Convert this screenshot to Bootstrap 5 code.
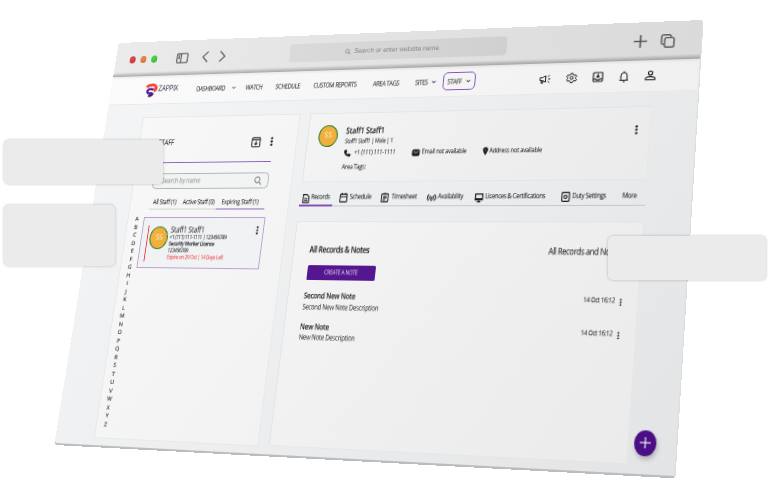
<!DOCTYPE html>
<html lang="en">
<head>
<meta charset="utf-8">
<meta name="viewport" content="width=device-width, initial-scale=1">
<title>Zappix – Staff</title>
<link href="https://cdn.jsdelivr.net/npm/bootstrap@5.3.0/dist/css/bootstrap.min.css" rel="stylesheet">
<style>
  html, body { width: 771px; height: 502px; overflow: hidden; background: #fff; }
  .stage { width: 771px; height: 502px; }
  /* the browser window is laid out flat at 630x430, then tilted in perspective */
  .plane {
    width: 630px; height: 430px; transform-origin: 0 0;
    transform: matrix3d(.795067,-.0402603,0,-.000187649, -.156947,.864912,0,-.00014745, 0,0,1,0, 118.6,43,0,1);
    font-family: "Open Sans", "Noto Sans", sans-serif; font-size: 5.6px; line-height: 1;
    letter-spacing: -.025em; color: #1d1d20; white-space: nowrap; text-rendering: geometricPrecision;
    -webkit-text-stroke: .05px currentColor;
    background: linear-gradient(125deg, #f3f4f6 10%, #eceef0 50%, #e2e4e6 100%);
    border-radius: 3px 3px 0 4px;
    box-shadow: 0 2px 0 #babcbd, 1px 0 0 #dcdddd;
  }
  svg { display: block; fill: none; stroke: currentColor; overflow: visible; }
  .semi { font-weight: 600; }
  /* condensed lettering */
  .tall { display: inline-block; transform: scaleY(1.22); }
  .chrome {
    height: 38.5px; border-radius: 3px 3px 0 0; color: #5b5b5b;
    background: linear-gradient(180deg, transparent 34px, rgba(90,90,90,.28) 37px, rgba(90,90,90,.4) 38.5px), linear-gradient(100deg, #ebebeb, #dadada);
    display: grid; align-items: center; padding-top: 1px;
    grid-template-columns: 16.5px 13px 13px 30.5px 30.3px 19.5px 81.2px 234px 139.7px 27.1px;
  }
  .lamp { width: 7.4px; height: 8px; border-radius: 50%; }
  .lamp-r { background: radial-gradient(circle at 40% 40%, #e04a4a, #c4252b); }
  .lamp-o { background: radial-gradient(circle at 40% 40%, #ea8a4e, #cf6a30); }
  .lamp-g { background: radial-gradient(circle at 40% 40%, #4bd44b, #2bb32e); }
  .address { height: 20.5px; margin-top: -1.5px; padding-right: 9px; border-radius: 4px; background: linear-gradient(100deg, #dadada, #d0d0d0); color: #858585; font: 6.7px/1 Inter, sans-serif; letter-spacing: -.02em; -webkit-text-stroke: 0; }
  .topnav {
    height: 32.5px; background: linear-gradient(100deg, #fbfbfb, #f0f0f0); border-bottom: 1px solid #e7e9ea;
    display: grid; align-items: center; padding-top: 1.4px;
    box-shadow: inset 0 2px 2px rgba(0,0,0,.05);
    grid-template-columns: 41.5px 15.5px 45px 57px 34px 42.4px 65.3px 45.2px 28.7px 99.6px 27px 26px 25.5px 25.5px 14px;
    font-size: 6px; letter-spacing: -.055em;
  }
  .current { width: 34.5px; height: 19.5px; margin-top: -.6px; border: 1px solid #8355b8; border-radius: 5px; }
  .brand-name { font-size: 7.5px; letter-spacing: -.03em; color: #34304a; -webkit-text-stroke: 0; }
  .workspace { padding: 13.5px 43px 0 44px; display: grid; grid-template-columns: 181px 351.5px; gap: 10.5px; }
  .pane { background: linear-gradient(125deg, #f4f4f4, #efefef 50%, #ebebeb); border: 1px solid rgba(216,221,221,.5); }
  .staff-pane { height: 338px; background: linear-gradient(125deg, #f8f8f8, #f2f2f2); }
  .side { padding: 0 25.5px 0 21.5px; }
  .side-head { height: 50px; padding-top: 9px; border-bottom: 1.3px solid #8d62bd; font-size: 7px; }
  .side-tools { width: 25px; }
  .finder { height: 17.5px; margin-top: 11px; padding: 0 6.5px 0 10px; border: .8px solid #b0b3b5; border-radius: 4.5px; color: #8b8d90; background: #f2f4f4; font-size: 6.2px; }
  .filters { margin-top: 6.5px; height: 15.5px; display: grid; grid-template-columns: 4.5px 34.5px 38px 54.5px; align-items: center; font-size: 5.8px; border-bottom: 1.2px solid #cfd1d2; }
  .filters .tall { position: relative; top: .7px; }
  .filters .chosen { height: 15.5px; border-bottom: 1.5px solid #8d62bd; padding-left: 6px; }
  .roster { display: grid; grid-template-columns: 18px 138px; padding-top: 8px; }
  .alphabet { font-size: 6px; line-height: 8.52px; text-align: center; margin-left: 2px; width: 16px; margin-top: -2px; -webkit-text-stroke: .1px currentColor; }
  .person { height: 54px; border: 1px solid #b9a0d6; background: #f0f2f4; display: grid; grid-template-columns: 6px 1.4px 2px 22px .8px 1fr 8px; }
  .warn { background: #f0343a; height: 38px; margin-top: 8px; }
  .face { width: 21px; height: 24px; border-radius: 50%; background: #efb03c; border: 1.3px solid #2f7d2f; color: #fdf3dc; font-size: 8px; -webkit-text-stroke: 0; }
  .person .face { margin-top: 9px; }
  .facts { padding-top: 9px; font-size: 4.95px; letter-spacing: -.05em; }
  .facts div { height: 6.9px; line-height: 6.9px; }
  .facts .who { font-size: 7.3px; height: 9.2px; line-height: 8.3px; letter-spacing: -.03em; -webkit-text-stroke: 0; }
  .facts .tall { transform-origin: 0 50%; }
  .expire { color: #f23b3f; }
  .profile { height: 73px; display: grid; grid-template-columns: 11.5px 29.5px 1fr 14.4px; }
  .profile .face { margin-top: 12.3px; height: 23px; }
  .profile-name { padding-top: 16px; font-size: 7.3px; height: 24.8px; }
  .profile-line { font-size: 5.4px; height: 9px; padding-top: 2.4px; letter-spacing: -.045em; }
  .contact { display: grid; grid-template-columns: 11.5px 61.7px 9.9px 63.1px 6.6px 60px; align-items: center; height: 8px; margin-top: 4.5px; }
  .sections { height: 25px; display: grid; grid-template-columns: 3.2px 9.5px 30.5px 11.1px 33.600px 10.8px 36.600px 11.4px 38.2px 10px 75.600px 10.5px 48.5px 20px; align-items: center; border-bottom: 1.2px solid #c6c9cb; padding-top: 9.8px; font-size: 5.95px; letter-spacing: -.05em; }
  .marker { width: 36.7px; height: 1.5px; background: #8050b6; margin-top: -1.4px; }
  .notes { height: 224px; margin-top: 14.9px; padding: 26.4px 14px 0 17px; }
  .head { font-size: 7.4px; letter-spacing: -.045em; height: 8px; }
  .filter-name { width: 74px; font-size: 7.4px; }
  .make { width: 72.5px; height: 15.8px; background: #55178f; color: #f3eaff; border-radius: 1.5px; font-size: 5.4px; letter-spacing: -.06em; margin-top: 9.8px; -webkit-text-stroke: 0; }
  .note { height: 30.5px; }
  .note-list { padding-top: 12.8px; }
  .note-title { font-size: 6.6px; height: 7px; letter-spacing: -.02em; }
  .note-text { font-size: 6.1px; letter-spacing: -.03em; margin-top: 3.5px; -webkit-text-stroke: 0; }
  .stamp { font-size: 5.5px; letter-spacing: -.035em; }
  .fab { position: absolute; left: 591.5px; top: 391px; width: 20.5px; height: 22.8px; border-radius: 50%; background: #4a0f84; color: #fff; box-shadow: 1px 3px 4px rgba(0,0,0,.22); }
  .slab { position: absolute; background: #ebebeb; border-radius: 5px; box-shadow: 0 0 3px rgba(0,0,0,.25); }
  .slab-a { left: 4px; top: 140px; width: 159px; height: 44px; }
  .slab-b { left: 4px; top: 205px; width: 111px; height: 61px; }
  .slab-c { left: 608px; top: 236px; width: 158px; height: 44px; }
</style>
</head>
<body>
<svg width="0" height="0" class="position-absolute" aria-hidden="true">
  <symbol id="dots" viewBox="0 0 4 12"><g fill="#222" stroke="none"><circle cx="2" cy="2" r="1.400"/><circle cx="2" cy="6" r="1.400"/><circle cx="2" cy="10" r="1.400"/></g></symbol>
  <symbol id="lens" viewBox="0 0 10 10"><circle cx="4" cy="4" r="3.200"/><path d="M6.200 6.200 9.500 9.500"/></symbol>
  <symbol id="down" viewBox="0 0 6 4"><path d="M.8.800 3 3.100 5.200.800"/></symbol>
</svg>
<main class="stage position-relative overflow-hidden">
  <div class="plane position-relative">
    <header class="chrome">
      <i></i><span class="lamp lamp-r"></span><span class="lamp lamp-o"></span><span class="lamp lamp-g"></span>
      <svg width="14" height="12" viewBox="0 0 14 12" stroke-width="1.300"><rect x=".8" y=".8" width="12.400" height="10.400" rx="1.200"/><path d="M5.500 1v10M2.300 3h1.800M2.300 4.800h1.800M2.300 6.400h1.800"/></svg>
      <svg width="8" height="13" viewBox="0 0 8 13" stroke-width="1.300"><path d="M7 .800 1.200 6.500 7 12.200"/></svg>
      <svg width="8" height="13" viewBox="0 0 8 13" stroke-width="1.300"><path d="m1 .800 5.800 5.700L1 12.200"/></svg>
      <div class="address d-flex align-items-center justify-content-center"><svg width="6" height="7" class="me-1" stroke-width="1.200"><use href="#lens"/></svg><span>Search or enter website name</span></div>
      <svg width="13" height="13" viewBox="0 0 12 12" stroke-width="1.500" class="ms-auto"><path d="M6 0v12M0 6h12"/></svg>
      <svg width="14" height="14" viewBox="0 0 14 14" stroke-width="1.400" class="ms-auto"><rect x="4" y="3.600" width="9" height="9.600" rx="1.800"/><path d="M3.600 10.400H2.600A1.800 1.800 0 0 1 .9 8.600V2.600A1.800 1.800 0 0 1 2.600.800h5.600A1.800 1.800 0 0 1 10 2.600v.800"/></svg>
    </header>
    <nav class="topnav">
      <i></i>
      <svg width="14" height="16.500" viewBox="0 0 14 16"><path stroke="#f4473f" stroke-width="3.400" d="M.8 4.200C3.800 1.300 10.500.800 11.900 4.300c.7 2-.4 3.600-2.200 4.500"/><path stroke="#54209a" stroke-width="2.500" d="M9.200 7.400C6 5.700 2.300 6.700 2.200 9c0 2.600 3.300 2.600 6.300 2"/><path stroke="#3d1a7c" stroke-width="3" d="M4 13.700c2 .8 4.300.1 5-2.500"/></svg>
      <span><span class="brand-name tall">ZAPPIX</span></span>
      <span class="d-flex align-items-center"><span class="tall">DASHBOARD</span><svg width="5" height="3.500" class="ms-2" stroke-width=".7"><use href="#down"/></svg></span>
      <span><span class="tall">WATCH</span></span><span><span class="tall">SCHEDULE</span></span><span><span class="tall">CUSTOM REPORTS</span></span><span><span class="tall">AREA TAGS</span></span>
      <span class="d-flex align-items-center"><span class="tall">SITES</span><svg width="5" height="3.500" class="ms-1" stroke-width=".9"><use href="#down"/></svg></span>
      <span class="current d-flex align-items-center justify-content-center"><span class="tall">STAFF</span><svg width="5" height="3.500" class="ms-1" stroke-width=".9"><use href="#down"/></svg></span>
      <svg width="12" height="10" viewBox="0 0 12 10" stroke-width="1"><path d="M1 3.600h2.500L6.500 1.800v6.400L3.500 6.600H1ZM2.300 6.800v2.500h1.500V6.800M8.700 2.800 10.400 1.200M9 5h2.300M8.700 7.200l1.700 1.600"/></svg>
      <svg width="11" height="11.500" viewBox="0 0 11 11" stroke-width="1"><circle cx="5.500" cy="5.500" r="1.500"/><path d="m4.600.8h1.800l.4 1.400 1.200.6 1.500-.4.9 1.600-1 1.100v1l1 1.100-.9 1.500-1.500-.4-1.200.7-.4 1.300H4.600l-.4-1.300L3 8.300l-1.500.4L.6 7.200l1-1.100v-1L.6 4l.9-1.600 1.500.4 1.200-.6Z"/></svg>
      <svg width="11" height="11" viewBox="0 0 11 11" stroke-width="1.100"><rect x="1" y="1" width="9" height="9" rx=".8"/><path d="M5.500 2.300v3.500M4 4.500l1.500 1.500L7 4.500M1 7.500h2.600l.6 1h2.600l.6-1H10"/></svg>
      <svg width="10" height="12" viewBox="0 0 10 12" stroke-width="1"><path d="M.8 9.500h8.400M2 9.500V5a3 3.300 0 0 1 6 0v4.500M5 .4v1.300M4 11h2"/></svg>
      <svg width="11" height="11" viewBox="0 0 11 11" stroke-width="1.100"><circle cx="5.500" cy="3" r="2"/><path d="M1 9.800V8.600C1 7.400 3.300 6.600 5.500 6.600s4.500.8 4.500 2v1.200Z"/></svg>
    </nav>
    <div class="workspace">
      <aside class="pane staff-pane">
        <div class="side">
          <div class="side-head d-flex align-items-center justify-content-between">
            <span><span class="tall">STAFF</span></span>
            <div class="side-tools d-flex align-items-center justify-content-between">
              <svg width="10.500" height="11.500" viewBox="0 0 11 12" stroke-width="1.100"><rect x=".8" y=".8" width="9.400" height="10.400" rx="1.200"/><path d="M1 3h9M5.500 4.700v4M3.800 7.200l1.700 1.700 1.700-1.700"/></svg>
              <svg width="3.500" height="10.500"><use href="#dots"/></svg>
            </div>
          </div>
          <div class="finder d-flex align-items-center justify-content-between"><span class="tall">Search by name</span><svg width="8.500" height="9.500" viewBox="0 0 10 10" preserveAspectRatio="none" stroke="#222" stroke-width="1.300"><use href="#lens"/></svg></div>
          <div class="filters"><i></i><span><span class="tall">All Staff (1)</span></span><span><span class="tall">Active Staff (0)</span></span><span class="chosen d-flex align-items-center"><span class="tall">Expiring Staff (1)</span></span></div>
        </div>
        <div class="roster">
          <div class="alphabet">A<br>B<br>C<br>D<br>E<br>F<br>G<br>H<br>I<br>J<br>K<br>L<br>M<br>N<br>O<br>P<br>Q<br>R<br>S<br>T<br>U<br>V<br>W<br>X<br>Y<br>Z</div>
          <div class="person">
            <i></i><span class="warn"></span><i></i>
            <span class="face d-flex align-items-center justify-content-center">SS</span><i></i>
            <div class="facts"><div class="who"><span class="tall">Staff1 Staff1</span></div><div><span class="tall">+1 (111) 111-1111 | 123456789</span></div><div class="semi"><span class="tall">Security Worker Licence</span></div><div><span class="tall">123456789</span></div><div class="expire"><span class="tall">Expire on 29 Oct | 14 Days Left</span></div></div>
            <svg width="3.500" height="9.500" class="mt-2"><use href="#dots"/></svg>
          </div>
        </div>
      </aside>
      <section>
        <div class="pane profile">
          <i></i><span class="face d-flex align-items-center justify-content-center">SS</span>
          <div>
            <div class="profile-name semi"><span class="tall">Staff1 Staff1</span></div>
            <div class="profile-line"><span class="tall">Staff1 Staff1 | Male | 1</span></div>
            <div class="contact">
              <svg width="7" height="7.500" viewBox="0 0 8 8" stroke="none"><path fill="#222" d="M.5 1 2.300.300l1 2.200-1 1c.5 1.200 1.300 2 2.400 2.500l1-1L8 6 7.300 7.800C3.500 8 .3 5 .5 1Z"/></svg><span><span class="tall">+1 (111) 111-1111</span></span>
              <svg width="7" height="6.500" viewBox="0 0 7 6" stroke="none"><rect width="7" height="6" rx="1" fill="#222"/><path d="m1 1.500 2.500 1.800L6 1.500" stroke="#eee" stroke-width=".7"/></svg><span><span class="tall">Email not available</span></span>
              <svg width="4.500" height="7" viewBox="0 0 5 8" stroke="none"><path fill="#222" fill-rule="evenodd" d="M2.500 0C4 0 5 1.100 5 2.500 5 4.300 2.500 8 2.500 8S0 4.300 0 2.500C0 1.100 1 0 2.500 0Zm0 1.600a1 1 0 1 0 0 2 1 1 0 0 0 0-2Z"/></svg><span><span class="tall">Address not available</span></span>
            </div>
            <div class="pt-2"><span class="tall">Area Tags:</span></div>
          </div>
          <svg width="3.500" height="10" class="mt-3"><use href="#dots" y="1.500"/></svg>
        </div>
        <div class="sections">
          <i></i>
          <svg width="7.500" height="9.500" viewBox="0 0 7 9" stroke-width="1.050"><path d="M.6.600h3.600L6.400 2.800v5.600H.6ZM2 4.500h3M2 6.300h3"/></svg><span><span class="tall">Records</span></span>
          <svg width="8.500" height="10" viewBox="0 0 8 9" preserveAspectRatio="none" stroke-width="1"><rect x=".6" y="1.200" width="6.800" height="7.200" rx=".6"/><path d="M.6 3.600h6.800M2.300 0v2M5.700 0v2"/></svg><span><span class="tall">Schedule</span></span>
          <svg width="8" height="10" viewBox="0 0 8 9" preserveAspectRatio="none" stroke-width="1"><rect x=".6" y="1.200" width="6.800" height="7.200" rx=".6"/><path d="M2.800 1h2.400M2.200 3.500h3.600M2.200 5h3.600M2.200 6.600h2.200"/></svg><span><span class="tall">Timesheet</span></span>
          <svg width="9.500" height="8.500" viewBox="0 0 9 8" stroke-width="1"><path d="M1.800 1C.2 2.800.2 5.200 1.800 7M3.200 2.200c-.8 1.200-.8 2.400 0 3.600M7.200 1c1.600 1.800 1.600 4.200 0 6M5.800 2.200c.8 1.200.8 2.400 0 3.600M4.500 3v4.500"/></svg><span><span class="tall">Availability</span></span>
          <svg width="8.500" height="9.500" viewBox="0 0 8 9" preserveAspectRatio="none" stroke-width="1.100"><path d="M.6.800h6.800v5.400H.6ZM.6 5.200h6.800M2.300 8.200h3.400M4 6v2"/></svg><span><span class="tall">Licences &amp; Certifications</span></span>
          <svg width="8.500" height="10" viewBox="0 0 8 9" preserveAspectRatio="none" stroke-width="1"><rect x=".6" y=".6" width="6.800" height="7.800" rx=".8"/><circle cx="4" cy="4.500" r="1.400"/></svg><span><span class="tall">Duty Settings</span></span>
          <span><span class="tall">More</span></span>
        </div>
        <div class="marker"></div>
        <div class="pane notes">
          <div class="d-flex justify-content-between head"><span class="semi tall">All Records &amp; Notes</span><span class="filter-name tall">All Records and Notes</span></div>
          <div class="make d-flex align-items-center justify-content-center"><span class="tall">CREATE A NOTE</span></div>
          <div class="note-list">
            <div class="note d-flex justify-content-between">
              <div><div class="note-title semi"><span class="tall">Second New Note</span></div><div class="note-text"><span class="tall">Second New Note Description</span></div></div>
              <div class="stamp d-flex align-items-start"><span class="tall">14 Oct 16:12</span><svg width="3" height="7.500" class="ms-1"><use href="#dots"/></svg></div>
            </div>
            <div class="note d-flex justify-content-between">
              <div><div class="note-title semi"><span class="tall">New Note</span></div><div class="note-text"><span class="tall">New Note Description</span></div></div>
              <div class="stamp d-flex align-items-start"><span class="tall">14 Oct 16:12</span><svg width="3" height="7.500" class="ms-1"><use href="#dots"/></svg></div>
            </div>
          </div>
        </div>
      </section>
    </div>
    <div class="fab d-flex align-items-center justify-content-center"><svg width="10" height="10" viewBox="0 0 10 10" stroke-width="1"><path d="M5 0v10M0 5h10"/></svg></div>
  </div>
  <div class="slab slab-a"></div>
  <div class="slab slab-b"></div>
  <div class="slab slab-c"></div>
</main>
<script src="https://cdn.jsdelivr.net/npm/bootstrap@5.3.0/dist/js/bootstrap.bundle.min.js"></script>
</body>
</html>
